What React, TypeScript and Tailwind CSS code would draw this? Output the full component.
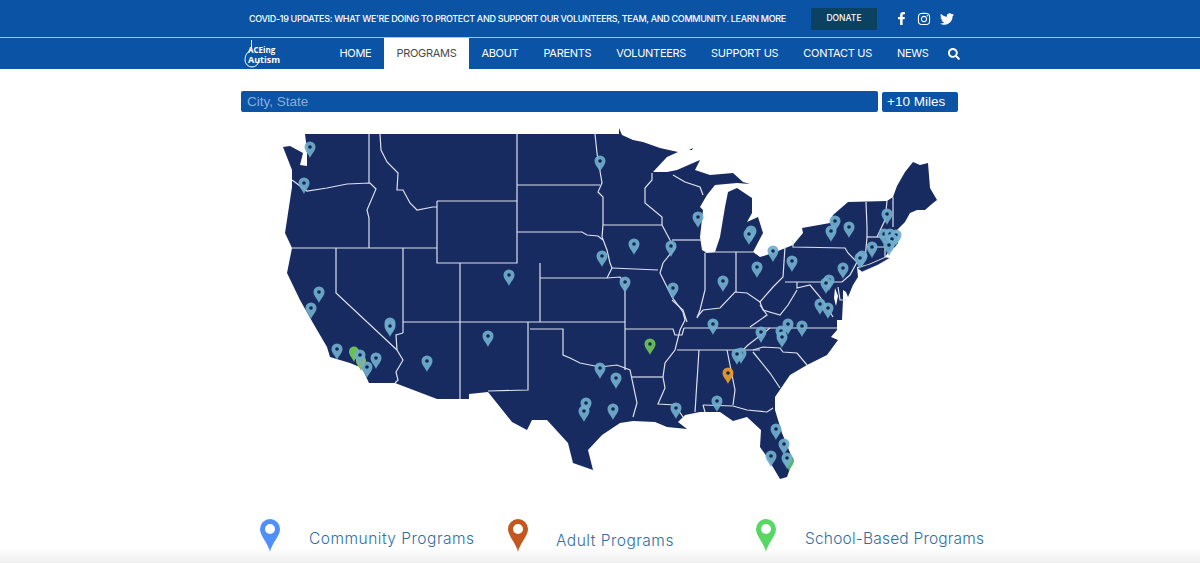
import { FaFacebookF, FaInstagram, FaTwitter, FaSearch } from "react-icons/fa";

const navLinks = ["HOME", "PROGRAMS", "ABOUT", "PARENTS", "VOLUNTEERS", "SUPPORT US", "CONTACT US", "NEWS"];

const usOutline =
  "M305,134 L619,134 L619,128 L622,135 L633,140 L643,142 L660,148 L678,152 L667,157 L653,172 L667,172 L677,170 L693,163 L700,160 L695,170 L710,175 L733,173 L743,182 L750,184 L737,183 L715,185 L707,195 L700,207 L703,210 L700,237 L702,250 L707,253 L715,252 L720,237 L725,207 L728,192 L737,188 L752,198 L752,213 L747,222 L758,217 L763,233 L753,252 L760,257 L773,253 L793,245 L803,233 L802,228 L830,223 L833,215 L848,202 L887,201 L893,197 L897,186 L905,172 L913,162 L920,165 L928,163 L930,188 L937,200 L933,203 L925,210 L917,210 L910,213 L905,222 L900,227 L895,232 L898,243 L895,247 L890,250 L885,257 L867,265 L857,267 L858,277 L853,285 L848,297 L846,292 L843,290 L843,300 L842,320 L837,320 L837,330 L831,337 L838,340 L827,355 L807,365 L790,375 L775,397 L775,410 L782,433 L793,460 L787,477 L780,479 L767,457 L760,447 L761,430 L747,417 L733,421 L720,412 L700,412 L685,415 L678,422 L687,429 L667,427 L655,422 L633,421 L620,423 L602,435 L588,450 L593,470 L573,463 L568,443 L547,420 L532,420 L527,430 L512,422 L488,392 L469,394 L469,399 L437,399 L395,383 L369,383 L362,368 L350,363 L330,357 L327,347 L313,323 L300,300 L287,273 L292,248 L285,233 L292,187 L292,170 L283,147 L290,146 L303,153 L300,165 L307,166 L307,150 Z";

const stateLines = [
  "369,134 369,183",
  "292,180 307,191 327,188 347,184 370,183 376,189 367,210 369,218 369,248",
  "292,248 437,248",
  "380,134 381,150 387,162 398,173 397,190 403,190 410,203 417,210 433,207 437,207",
  "437,201 517,201 517,263 437,263 437,201",
  "517,134 517,201",
  "517,185 600,185",
  "517,232 582,232 587,235 598,236 603,240",
  "595,134 597,153 602,183 598,192 603,197 603,225 602,237 607,250 610,263 612,268 607,278",
  "603,225 662,225",
  "460,263 460,399",
  "540,263 540,322",
  "540,278 607,278 620,277 625,283 625,370",
  "403,248 403,333",
  "403,322 625,322",
  "530,329 563,329 563,355 570,358 580,363 600,367 617,365 630,370 637,403 633,417",
  "528,322 528,390 488,391",
  "336,248 336,293 397,350",
  "403,333 396,335 397,350 403,360 396,372 398,380 395,383",
  "612,268 658,270",
  "625,329 673,329 675,335 682,335 684,328",
  "632,377 663,377",
  "662,225 670,240 675,248 663,263 660,273 672,297 683,312 685,320 680,330 675,350 665,363 663,377 665,388 658,404 675,405 683,417",
  "672,240 702,240",
  "662,225 662,217 645,203 645,188 652,180 652,173",
  "673,175 685,182 700,187 703,195",
  "705,253 705,290 700,310 697,318",
  "705,252 753,252",
  "736,252 736,292",
  "697,317 703,310 720,308 735,292 747,293 760,302 773,287 783,277 785,247",
  "785,282 842,282 850,275 857,262 848,253 845,248 793,247 793,240",
  "866,202 867,227 867,237 865,260",
  "887,201 885,220 877,237",
  "893,197 893,227",
  "867,237 897,237",
  "867,247 885,247 885,257",
  "797,282 797,288 810,285 820,297 827,307 833,317",
  "760,302 763,310 780,315 788,305 797,290",
  "838,287 840,300 847,300",
  "684,328 837,328",
  "750,327 767,315 760,305",
  "672,300 683,310 687,322",
  "677,350 760,350",
  "743,350 748,345 770,328",
  "699,350 695,412",
  "727,350 735,390 733,405",
  "703,405 705,412",
  "703,405 733,406 747,410 767,412 773,408",
  "753,352 770,373 780,388",
  "753,350 763,347 780,348 783,352 797,353 807,365",
];

const communityPins = [
  [310, 148], [304, 184], [319, 293], [311, 309], [337, 350], [390, 324], [390, 327], [360, 356], [367, 368], [376, 359],
  [427, 362], [488, 337], [509, 276], [600, 162], [602, 257], [634, 245], [671, 247], [625, 283], [673, 289], [713, 325],
  [723, 282], [698, 218], [751, 232], [749, 235], [773, 252], [757, 268], [792, 262], [835, 222], [831, 232], [849, 228],
  [887, 215], [884, 235], [890, 235], [896, 236], [892, 240], [889, 246], [872, 248], [862, 257], [860, 259], [843, 269],
  [829, 281], [826, 284], [820, 305], [828, 309], [761, 333], [788, 325], [781, 332], [782, 338], [802, 327], [741, 354],
  [737, 355], [600, 369], [616, 379], [586, 404], [584, 412], [613, 410], [676, 409], [717, 402], [776, 430], [784, 445],
  [771, 457], [787, 459],
];

function MapPin({ x, y, color }: { x: number; y: number; color: string }) {
  return (
    <g transform={`translate(${x} ${y})`}>
      <path d="M0,10 C-1.5,6 -5.5,3 -5.5,-1 A5.5,5.5 0 1 1 5.5,-1 C5.5,3 1.5,6 0,10 Z" fill={color} fillOpacity="0.92" />
      <circle cx="0" cy="-1" r="1.8" fill="#14264f" />
    </g>
  );
}

function UsMap() {
  return (
    <svg viewBox="270 120 680 370" className="block w-[680px] h-[370px] ml-[29px]">
      <path d={usOutline} fill="#182b61" />
      <path d="M857,268 L870,264 L886,257 L890,258 L878,265 L862,272 Z" fill="#182b61" stroke="#ffffff" strokeWidth="0.6" />
      <path d="M835,288 L838,296 L836,306 L834,298 Z" fill="#ffffff" />
      <path d="M689,150 L693,148 L692,150 Z" fill="#182b61" />
      {stateLines.map((points) => (
        <polyline key={points} points={points} fill="none" stroke="#dde1ee" strokeWidth="1.2" />
      ))}
      <path d="M354,353 m0,9 c-1.5,-4 -5,-6.5 -5,-10.5 a5,5 0 1 1 10,0 c0,4 -3.5,6.5 -5,10.5 Z" fill="#6cc05c" />
      <path d="M361,362 m0,9 c-1.5,-4 -5,-6.5 -5,-10.5 a5,5 0 1 1 10,0 c0,4 -3.5,6.5 -5,10.5 Z" fill="#8dbb5c" />
      <path d="M789,462 m0,9 c-1.5,-4 -5,-6.5 -5,-10.5 a5,5 0 1 1 10,0 c0,4 -3.5,6.5 -5,10.5 Z" fill="#58b866" />
      {communityPins.map(([x, y], i) => (
        <MapPin key={i} x={x} y={y} color="#70aecd" />
      ))}
      <MapPin x={650} y={345} color="#6cc45a" />
      <MapPin x={728} y={374} color="#eb9c2c" />
    </svg>
  );
}

function LegendPin({ color }: { color: string }) {
  return (
    <svg viewBox="0 0 20 33" className="w-5 h-[33px] shrink-0">
      <path
        fillRule="evenodd"
        d="M10,33 C8,24 0,17 0,10 A10,10 0 1 1 20,10 C20,17 12,24 10,33 Z M10,5 A5,5 0 1 0 10,15 A5,5 0 1 0 10,5 Z"
        fill={color}
      />
    </svg>
  );
}

export default function App() {
  return (
    <div className="relative h-[563px] overflow-hidden bg-white font-['Inter',sans-serif]">
      <div className="bg-[#0b53a4] h-[37px]">
        <div className="w-[718px] mx-auto h-full flex items-center pl-2 text-white">
          <a className="text-[9px] font-medium tracking-[-0.32px] whitespace-nowrap w-[562px] shrink-0">
            COVID-19 UPDATES: WHAT WE&apos;RE DOING TO PROTECT AND SUPPORT OUR VOLUNTEERS, TEAM, AND COMMUNITY. LEARN MORE
          </a>
          <button className="bg-[#0b4261] w-[66px] h-[22px] text-[8.5px] font-medium rounded-[1px] shrink-0">DONATE</button>
          <div className="flex items-center gap-[9px] ml-[18px]">
            <FaFacebookF className="w-[13px] h-[13px]" />
            <FaInstagram className="w-[14px] h-[14px]" />
            <FaTwitter className="w-[14px] h-[14px]" />
          </div>
        </div>
      </div>
      <div className="h-px bg-[#a9c4e2]" />
      <nav className="bg-[#0b53a4] h-[31px]">
        <div className="w-[718px] mx-auto h-full flex items-center text-white">
          <div className="relative w-[36px] h-[29px] ml-[3px] mr-[47px] shrink-0">
            <svg viewBox="0 0 36 29" className="absolute inset-0 w-full h-full">
              <path d="M7.5,1 L7.5,10 C3,13 1,17 1,21 A7,7 0 0 0 15,21" fill="none" stroke="#ffffff" strokeWidth="1" />
            </svg>
            <span className="absolute left-[4px] top-[6px] text-[8px] leading-[10px] font-bold font-['Open_Sans',sans-serif] whitespace-nowrap">ACEing</span>
            <span className="absolute left-[4px] top-[15px] text-[9px] leading-[11px] font-bold font-['Open_Sans',sans-serif] whitespace-nowrap">Autism</span>
          </div>
          {navLinks.map((link) => (
            <a
              key={link}
              className={
                link === "PROGRAMS"
                  ? "h-full flex items-center px-[12.5px] text-[11px] tracking-[-0.3px] whitespace-nowrap bg-white text-[#4a4a4a]"
                  : "h-full flex items-center px-[12.5px] text-[11px] tracking-[-0.3px] whitespace-nowrap"
              }
            >
              {link}
            </a>
          ))}
          <FaSearch className="w-3 h-3 ml-[7px] shrink-0" />
        </div>
      </nav>
      <main className="w-[718px] mx-auto pt-[22px]">
        <div className="flex items-center gap-1 font-['Liberation_Sans',sans-serif]">
          <input
            placeholder="City, State"
            className="w-[637px] h-[21px] bg-[#0b53a4] rounded-[2px] px-[6px] text-[13.5px] text-white placeholder:text-[#8caed6] outline-none"
          />
          <button className="w-[76px] h-[20px] bg-[#0b53a4] rounded-[2px] pl-[5px] text-left text-[13.5px] text-white">+10 Miles</button>
        </div>
        <div className="mt-2">
          <UsMap />
        </div>
        <div className="grid grid-cols-[248px_248px_1fr] pl-[19px] mt-[29px]">
          <div className="flex gap-[29px]">
            <LegendPin color="#4f8ff7" />
            <span className="mt-[10px] text-[15.5px] leading-5 font-light tracking-[0.5px] text-[#2f6ea5] whitespace-nowrap">Community Programs</span>
          </div>
          <div className="flex gap-[28px]">
            <LegendPin color="#c2571f" />
            <span className="mt-3 text-[15.5px] leading-5 font-light tracking-[0.5px] text-[#2f6ea5] whitespace-nowrap">Adult Programs</span>
          </div>
          <div className="flex gap-[29px]">
            <LegendPin color="#57d764" />
            <span className="mt-[10px] text-[15.5px] leading-5 font-light tracking-[0.2px] text-[#2f6ea5] whitespace-nowrap">School-Based Programs</span>
          </div>
        </div>
      </main>
      <div className="absolute inset-x-0 bottom-0 h-[16px] bg-gradient-to-b from-transparent to-[#efefef]" />
    </div>
  );
}
